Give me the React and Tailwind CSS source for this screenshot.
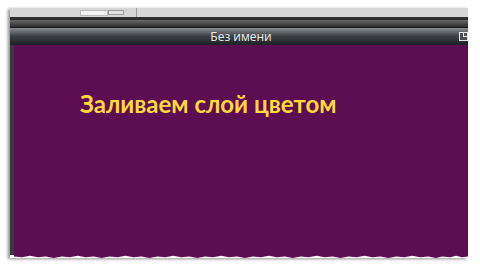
import React from 'react';

function TornEdge({ className }) {
  // ragged paper edge along the bottom
  return (
    <svg className={className} width="456" height="4" viewBox="0 0 456 4" preserveAspectRatio="none">
      <path
        d="M0 0 L456 0 L456 2 L450 3 L444 1 L438 3 L430 2 L424 4 L416 2 L408 3 L400 1 L392 3 L384 2 L376 4 L368 2 L360 3 L352 1 L344 3 L336 2 L328 4 L320 2 L312 3 L304 1 L296 3 L288 2 L280 4 L272 2 L264 3 L256 1 L248 3 L240 2 L232 4 L224 2 L216 3 L208 1 L200 3 L192 2 L184 4 L176 2 L168 3 L160 1 L152 3 L144 2 L136 4 L128 2 L120 3 L112 1 L104 3 L96 2 L88 4 L80 2 L72 3 L64 1 L56 3 L48 2 L40 4 L32 2 L24 3 L16 1 L8 3 L0 2 Z"
        fill="#5d0e52"
      />
    </svg>
  );
}

export default function App() {
  return (
    <div className="w-[480px] h-[268px] bg-white overflow-hidden pt-[8px] pl-[10px] pr-[12px] pb-[10px]" style={{ fontFamily: '"Open Sans", "DejaVu Sans", sans-serif' }}>
      <div className="h-full flex flex-col shadow-[-2px_1px_3px_rgba(0,0,0,0.45)]">
        {/* Toolbar strip */}
        <div className="h-[9px] shrink-0 bg-[#d6d6d6] flex items-center relative pr-[2px]">
          <div className="ml-[70px] h-[6px] w-[28px] bg-[#f4f4f4] border border-[#b8b8b8]" />
          <div className="h-[5px] w-[16px] bg-[#e2e2e2] border border-[#9a9a9a]" />
          <div className="ml-[12px] h-[9px] w-px bg-[#9a9a9a]" />
        </div>
        {/* Dark bands */}
        <div className="h-[3px] shrink-0 bg-[#2e2e2e]" />
        <div className="h-[8px] shrink-0 bg-gradient-to-b from-[#6a6a6a] via-[#4a4a4a] to-[#2c2c2c] border-b border-[#1a1a1a]" />
        {/* Title bar */}
        <div className="h-[17px] shrink-0 bg-gradient-to-b from-[#8a8d90] via-[#3a3e42] to-[#1d2226] flex items-center justify-center relative">
          <span className="text-[12px] leading-none text-[#eeeeee] ml-[4px]">Без имени</span>
          <div className="absolute right-[0px] top-[4px] w-[9px] h-[9px] border border-[#e8e8e8] bg-[#4a4d50] flex items-start justify-end">
            <div className="w-[4px] h-[4px] border-l border-b border-[#e8e8e8]" />
          </div>
        </div>
        {/* Canvas */}
        <div className="flex-1 flex">
          <div className="w-[4px] bg-[#3a3a3a]" />
          <div className="flex-1 bg-[#5d0e52] pl-[66px] pt-[47px] relative">
            <span className="text-[24px] leading-none font-bold text-[#ffd83c]" style={{ fontFamily: 'Lato, "Open Sans", sans-serif' }}>
              Заливаем слой цветом
            </span>
          </div>
        </div>
        <TornEdge className="block ml-[4px] w-[454px] h-[3px]" />
      </div>
    </div>
  );
}
